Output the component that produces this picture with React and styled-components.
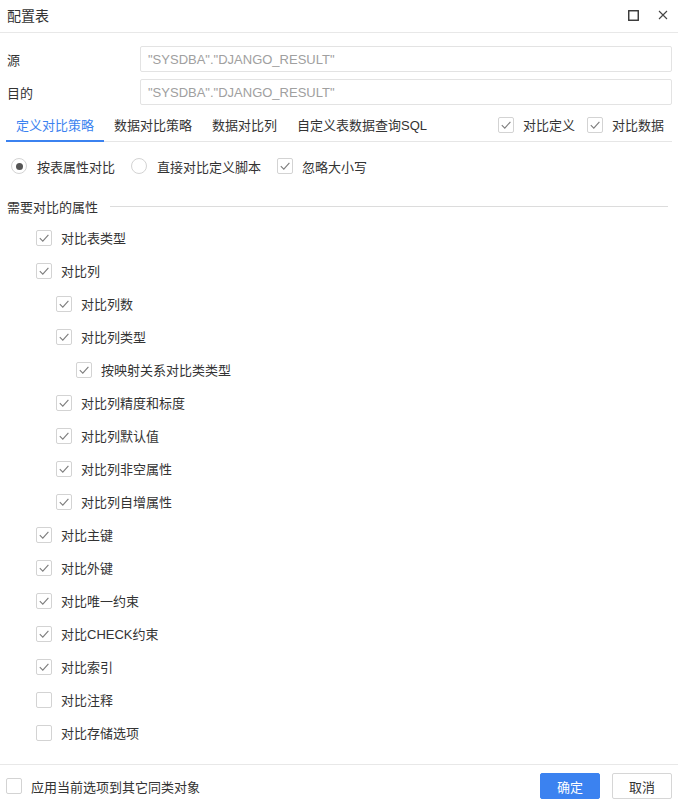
import React, { useState } from "react";
import styled, { createGlobalStyle } from "styled-components";

const Global = createGlobalStyle`
  html, body { margin: 0; padding: 0; background: #fff; }
  body { font-family: "Liberation Sans", "Noto Sans CJK SC", sans-serif; font-size: 13px; color: #333; }
  * { box-sizing: border-box; }
`;

const Dialog = styled.div`
  width: 678px;
  height: 807px;
  display: flex;
  flex-direction: column;
  background: #fff;
`;

const Header = styled.div`
  height: 33px;
  border-bottom: 1px solid #e8e8e8;
  display: flex;
  align-items: center;
  padding: 0 10px 3px 7px;
`;

const Title = styled.div`
  font-size: 14px;
  color: #333;
  flex: 1;
`;

const HeaderIcons = styled.div`
  display: flex;
  align-items: center;
  gap: 18px;
  padding-top: 1px;
`;

const IconBtn = styled.span`
  display: inline-flex;
  width: 11px;
  height: 11px;
  align-items: center;
  justify-content: center;
`;

const Body = styled.div`
  flex: 1;
  padding: 13px 6px 0 6px;
  display: flex;
  flex-direction: column;
`;

const FieldRow = styled.div`
  display: flex;
  align-items: center;
  margin-bottom: ${(p) => p.$mb || 0}px;
`;

const FieldLabel = styled.div`
  width: 134px;
  padding-left: 1px;
  color: #333;
`;

const FieldInput = styled.div`
  flex: 1;
  height: 26px;
  border: 1px solid #e3e3e3;
  border-radius: 2px;
  padding: 0 7px;
  display: flex;
  align-items: center;
  color: #a0a0a0;
  font-size: 13px;
`;

const TabBar = styled.div`
  display: flex;
  align-items: stretch;
  height: 37px;
  border-bottom: 1px solid #e6e6e6;
`;

const Tab = styled.div`
  padding: 4px 10px 0;
  display: flex;
  align-items: center;
  color: ${(p) => (p.$active ? "#3b82f0" : "#333")};
  border-bottom: 2px solid ${(p) => (p.$active ? "#3b82f0" : "transparent")};
  margin-bottom: -1px;
`;

const TabExtras = styled.div`
  margin-left: auto;
  display: flex;
  align-items: center;
  gap: 12px;
  padding-right: 8px;
  padding-top: 3px;
`;

const Option = styled.label`
  display: inline-flex;
  align-items: center;
  gap: ${(p) => p.$gap || 9}px;
  color: #333;
  cursor: pointer;
`;

const Box = styled.span`
  width: 16px;
  height: 16px;
  border: 1px solid #d3d3d3;
  border-radius: 2px;
  background: #fff;
  display: inline-flex;
  align-items: center;
  justify-content: center;
  flex: none;
`;

const RadioCircle = styled.span`
  width: 16px;
  height: 16px;
  border: 1px solid #d3d3d3;
  border-radius: 50%;
  display: inline-flex;
  align-items: center;
  justify-content: center;
  flex: none;
  &::after {
    content: "";
    width: 7px;
    height: 7px;
    border-radius: 50%;
    background: ${(p) => (p.$on ? "#555" : "transparent")};
  }
`;

const ModeRow = styled.div`
  display: flex;
  align-items: center;
  height: 20px;
  margin-top: 14px;
  padding-left: 5px;
  gap: 16px;
`;

const Section = styled.div`
  display: flex;
  align-items: center;
  height: 20px;
  margin-top: 20px;
  padding-left: 1px;
  padding-right: 4px;
  gap: 12px;
  &::after {
    content: "";
    flex: 1;
    height: 1px;
    background: #dcdcdc;
  }
`;

const List = styled.div`
  margin-top: 5px;
  display: flex;
  flex-direction: column;
`;

const ListRow = styled.div`
  height: 33px;
  display: flex;
  align-items: center;
  padding-left: ${(p) => 30 + p.$level * 20}px;
`;

const Footer = styled.div`
  height: 43px;
  border-top: 1px solid #e8e8e8;
  display: flex;
  align-items: center;
  padding: 0 6px 0 6px;
`;

const FooterButtons = styled.div`
  margin-left: auto;
  display: flex;
  gap: 12px;
`;

const Button = styled.button`
  width: 60px;
  height: 26px;
  border-radius: 2px;
  font-family: inherit;
  font-size: 13px;
  cursor: pointer;
  border: 1px solid ${(p) => (p.$primary ? "#3b82f0" : "#d6d6d6")};
  background: ${(p) => (p.$primary ? "#3b82f0" : "#fff")};
  color: ${(p) => (p.$primary ? "#fff" : "#333")};
  padding: 0;
`;

const Check = () => (
  <svg width="12" height="12" viewBox="0 0 12 12">
    <polyline points="1.8,6.2 4.8,9.2 10.4,2.8" fill="none" stroke="#7d7d7d" strokeWidth="1.1" />
  </svg>
);

const CheckBox = ({ checked, label, gap }) => (
  <Option $gap={gap}>
    <Box>{checked && <Check />}</Box>
    <span>{label}</span>
  </Option>
);

const Radio = ({ on, label }) => (
  <Option $gap={10}>
    <RadioCircle $on={on} />
    <span>{label}</span>
  </Option>
);

const items = [
  ["对比表类型", 0, true],
  ["对比列", 0, true],
  ["对比列数", 1, true],
  ["对比列类型", 1, true],
  ["按映射关系对比类类型", 2, true],
  ["对比列精度和标度", 1, true],
  ["对比列默认值", 1, true],
  ["对比列非空属性", 1, true],
  ["对比列自增属性", 1, true],
  ["对比主键", 0, true],
  ["对比外键", 0, true],
  ["对比唯一约束", 0, true],
  ["对比CHECK约束", 0, true],
  ["对比索引", 0, true],
  ["对比注释", 0, false],
  ["对比存储选项", 0, false],
];

export default function App() {
  const [tab] = useState(0);
  const tabs = ["定义对比策略", "数据对比策略", "数据对比列", "自定义表数据查询SQL"];
  return (
    <>
      <Global />
      <Dialog>
        <Header>
          <Title>配置表</Title>
          <HeaderIcons>
            <IconBtn>
              <svg width="11" height="11" viewBox="0 0 11 11">
                <rect x="0.75" y="0.75" width="9.5" height="9.5" fill="none" stroke="#333" strokeWidth="1.4" />
              </svg>
            </IconBtn>
            <IconBtn>
              <svg width="10" height="10" viewBox="0 0 10 10">
                <path d="M1 1 L9 9 M9 1 L1 9" stroke="#444" strokeWidth="1.1" />
              </svg>
            </IconBtn>
          </HeaderIcons>
        </Header>
        <Body>
          <FieldRow $mb={7}>
            <FieldLabel>源</FieldLabel>
            <FieldInput>"SYSDBA"."DJANGO_RESULT"</FieldInput>
          </FieldRow>
          <FieldRow>
            <FieldLabel>目的</FieldLabel>
            <FieldInput>"SYSDBA"."DJANGO_RESULT"</FieldInput>
          </FieldRow>
          <TabBar>
            {tabs.map((t, i) => (
              <Tab key={t} $active={i === tab}>
                {t}
              </Tab>
            ))}
            <TabExtras>
              <CheckBox checked label="对比定义" />
              <CheckBox checked label="对比数据" />
            </TabExtras>
          </TabBar>
          <ModeRow>
            <Radio on label="按表属性对比" />
            <Radio label="直接对比定义脚本" />
            <CheckBox checked label="忽略大小写" />
          </ModeRow>
          <Section>需要对比的属性</Section>
          <List>
            {items.map(([label, level, checked]) => (
              <ListRow key={label} $level={level}>
                <CheckBox checked={checked} label={label} />
              </ListRow>
            ))}
          </List>
        </Body>
        <Footer>
          <CheckBox label="应用当前选项到其它同类对象" />
          <FooterButtons>
            <Button $primary>确定</Button>
            <Button>取消</Button>
          </FooterButtons>
        </Footer>
      </Dialog>
    </>
  );
}
